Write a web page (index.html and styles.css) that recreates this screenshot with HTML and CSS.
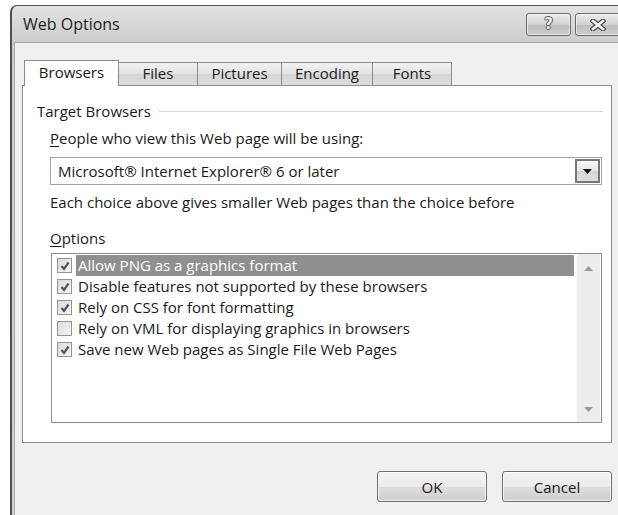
FILE: index.html
```html
<!DOCTYPE html>
<html lang="en">
<head>
<meta charset="utf-8">
<title>Web Options</title>
<link rel="stylesheet" href="styles.css">
</head>
<body>
<div class="window">
  <div class="titlebar">
    <span class="title">Web Options</span>
    <div class="caption-buttons">
      <div class="cap cap-help"><span class="help-glyph">?</span></div>
      <div class="cap cap-close">
        <svg width="16" height="12" viewBox="0 0 16 12">
          <path d="M3 2 L13 10 M13 2 L3 10" stroke="#4a4a4a" stroke-width="5" stroke-linecap="square" fill="none"/>
          <path d="M3 2 L13 10 M13 2 L3 10" stroke="#f4f4f4" stroke-width="2.6" stroke-linecap="square" fill="none"/>
        </svg>
      </div>
    </div>
  </div>

  <div class="client">
    <div class="tabs">
      <div class="tab tab-active tab-browsers">Browsers</div>
      <div class="tab tab-files">Files</div>
      <div class="tab tab-pictures">Pictures</div>
      <div class="tab tab-encoding">Encoding</div>
      <div class="tab tab-fonts">Fonts</div>
    </div>

    <div class="panel">
      <div class="group-head">
        <span>Target Browsers</span>
        <div class="group-rule"></div>
      </div>

      <div class="indent">
        <div class="label"><u>P</u>eople who view this Web page will be using:</div>

        <div class="combo">
          <span class="combo-value">Microsoft® Internet Explorer® 6 or later</span>
          <div class="combo-btn">
            <svg width="9" height="5" viewBox="0 0 9 5"><path d="M0 0 H9 L4.5 5 Z" fill="#111"/></svg>
          </div>
        </div>

        <div class="label hint">Each choice above gives smaller Web pages than the choice before</div>

        <div class="label options-label"><u>O</u>ptions</div>

        <div class="listbox">
          <div class="items">
            <div class="row">
              <span class="check on"><svg width="12" height="12" viewBox="0 0 12 12"><path d="M2.5 6 L5 9 L9.5 2.5" stroke="#555555" stroke-width="2.2" fill="none"/></svg></span>
              <span class="row-text selected">Allow PNG as a graphics format</span>
            </div>
            <div class="row">
              <span class="check on"><svg width="12" height="12" viewBox="0 0 12 12"><path d="M2.5 6 L5 9 L9.5 2.5" stroke="#555555" stroke-width="2.2" fill="none"/></svg></span>
              <span class="row-text">Disable features not supported by these browsers</span>
            </div>
            <div class="row">
              <span class="check on"><svg width="12" height="12" viewBox="0 0 12 12"><path d="M2.5 6 L5 9 L9.5 2.5" stroke="#555555" stroke-width="2.2" fill="none"/></svg></span>
              <span class="row-text">Rely on CSS for font formatting</span>
            </div>
            <div class="row">
              <span class="check"></span>
              <span class="row-text">Rely on VML for displaying graphics in browsers</span>
            </div>
            <div class="row">
              <span class="check on"><svg width="12" height="12" viewBox="0 0 12 12"><path d="M2.5 6 L5 9 L9.5 2.5" stroke="#555555" stroke-width="2.2" fill="none"/></svg></span>
              <span class="row-text">Save new Web pages as Single File Web Pages</span>
            </div>
          </div>
          <div class="scrollbar">
            <svg width="9" height="5" viewBox="0 0 9 5"><path d="M0 5 H9 L4.5 0 Z" fill="#9a9a9a"/></svg>
            <svg width="9" height="5" viewBox="0 0 9 5"><path d="M0 0 H9 L4.5 5 Z" fill="#9a9a9a"/></svg>
          </div>
        </div>
      </div>
    </div>

    <div class="footer">
      <div class="btn">OK</div>
      <div class="btn">Cancel</div>
    </div>
  </div>
</div>
</body>
</html>
```

FILE: styles.css
```css
* {
  box-sizing: border-box;
}

html,
body {
  margin: 0;
  padding: 0;
}

body {
  width: 618px;
  height: 515px;
  overflow: hidden;
  background: #ffffff;
  font-family: "Open Sans", "Noto Sans", "DejaVu Sans", sans-serif;
  font-size: 15px;
  color: #1a1a1a;
}

/* ---- window frame ---- */
.window {
  margin: 5px 0 0 10px;
  width: 615px;
  height: 530px;
  border: 1px solid #4f4f4f;
  border-left-width: 2px;
  border-radius: 7px 7px 0 0;
  background: linear-gradient(#e2e2e2, #cdcdcd 36px, #d2d2d2);
  padding: 0 2px;
  display: flex;
  flex-direction: column;
}

.titlebar {
  height: 36px;
  display: flex;
  justify-content: space-between;
  align-items: flex-start;
  flex: none;
}

.title {
  font-size: 16px;
  line-height: 36px;
  padding-left: 9px;
  color: #1c1c1c;
}

.caption-buttons {
  display: flex;
  gap: 4px;
  margin-top: 7px;
  margin-right: 1px;
}

.cap {
  height: 23px;
  border: 1px solid #6a6a6a;
  border-radius: 3px;
  background: linear-gradient(#ececec, #d2d2d2 50%, #bdbdbd 51%, #cfcfcf);
  box-shadow: inset 0 0 0 1px rgba(255, 255, 255, 0.55);
  display: flex;
  align-items: center;
  justify-content: center;
}

.cap-help {
  width: 45px;
}

.cap-close {
  width: 46px;
}

.help-glyph {
  font-family: "DejaVu Sans", sans-serif;
  font-weight: bold;
  font-size: 15px;
  line-height: 1;
  color: #e6e6e6;
  text-shadow: 1px 0 0 #5a5a5a, -1px 0 0 #5a5a5a, 0 1px 0 #5a5a5a, 0 -1px 0 #5a5a5a;
}

/* ---- client area ---- */
.client {
  flex: 1;
  background: #f0f0f0;
  border-top: 1px solid #a8a8a8;
  border-left: 1px solid #a8a8a8;
  padding: 17px 8px 0 7px;
  display: flex;
  flex-direction: column;
}

.tabs {
  display: flex;
  align-items: flex-end;
  margin-left: 2px;
  height: 26px;
  position: relative;
  z-index: 1;
}

.tab {
  height: 23px;
  margin-bottom: 1px;
  margin-right: -1px;
  border: 1px solid #8c8c8c;
  border-bottom: none;
  background: linear-gradient(#f2f2f2, #e3e3e3 50%, #d6d6d6 51%, #dcdcdc);
  display: flex;
  align-items: center;
  justify-content: center;
  line-height: 20px;
  padding-bottom: 2px;
}

.tab-active {
  height: 26px;
  margin-bottom: 0;
  background: #ffffff;
  padding-bottom: 4px;
}

.tab-browsers { width: 95px; }
.tab-files { width: 80px; }
.tab-pictures { width: 85px; }
.tab-encoding { width: 92px; }
.tab-fonts { width: 80px; }

.panel {
  margin-top: -1px;
  width: 590px;
  background: #ffffff;
  border: 1px solid #8e8e8e;
  padding: 15px 8px 19px 14px;
}

.group-head {
  display: flex;
  align-items: center;
  height: 20px;
  line-height: 20px;
}

.group-rule {
  flex: 1;
  height: 1px;
  margin-left: 8px;
  background: #d5d5d5;
}

.indent {
  margin-left: 13px;
  margin-right: 1px;
}

.label {
  line-height: 20px;
  margin-top: 7px;
}

.label u {
  text-decoration-thickness: 1px;
  text-underline-offset: 2px;
}

.hint {
  margin-top: 7px;
}

.options-label {
  margin-top: 16px;
}

/* ---- drop-down ---- */
.combo {
  margin-top: 9px;
  height: 28px;
  border: 1px solid #a3a3a3;
  display: flex;
  align-items: stretch;
  padding: 1px;
}

.combo-value {
  flex: 1;
  padding-left: 6px;
  line-height: 24px;
}

.combo-btn {
  width: 25px;
  border: 2px solid #767676;
  background: linear-gradient(#f6f6f6, #e6e6e6 50%, #d4d4d4 51%, #dedede);
  display: flex;
  align-items: center;
  justify-content: center;
}

/* ---- option list ---- */
.listbox {
  margin-top: 5px;
  margin-left: 1px;
  height: 170px;
  border: 1px solid #8c8c8c;
  display: flex;
}

.items {
  flex: 1;
  padding: 1px 1px 0 5px;
}

.row {
  height: 21px;
  display: flex;
  align-items: center;
}

.check {
  width: 15px;
  height: 15px;
  border: 1px solid #959595;
  background: linear-gradient(135deg, #dadada, #f6f6f6);
  margin-right: 4px;
  display: flex;
  align-items: center;
  justify-content: center;
  flex: none;
}

.row-text {
  flex: 1;
  height: 21px;
  line-height: 21px;
  padding-left: 2px;
}

.row-text.selected {
  background: #8f8f8f;
  color: #ffffff;
}

.scrollbar {
  width: 24px;
  margin: 0 1px 0 1px;
  background: #ededed;
  border-left: 1px solid #f8f8f8;
  display: flex;
  flex-direction: column;
  justify-content: space-between;
  align-items: center;
  padding: 12px 0 10px;
}

/* ---- dialog buttons ---- */
.footer {
  margin-top: 28px;
  width: 590px;
  display: flex;
  justify-content: flex-end;
  gap: 15px;
}

.btn {
  width: 110px;
  height: 31px;
  border: 1px solid #707070;
  border-radius: 3px;
  background: linear-gradient(#f4f4f4, #ebebeb 50%, #dddddd 51%, #d0d0d0);
  box-shadow: inset 0 0 0 1px rgba(255, 255, 255, 0.7);
  display: flex;
  align-items: center;
  justify-content: center;
}
```
